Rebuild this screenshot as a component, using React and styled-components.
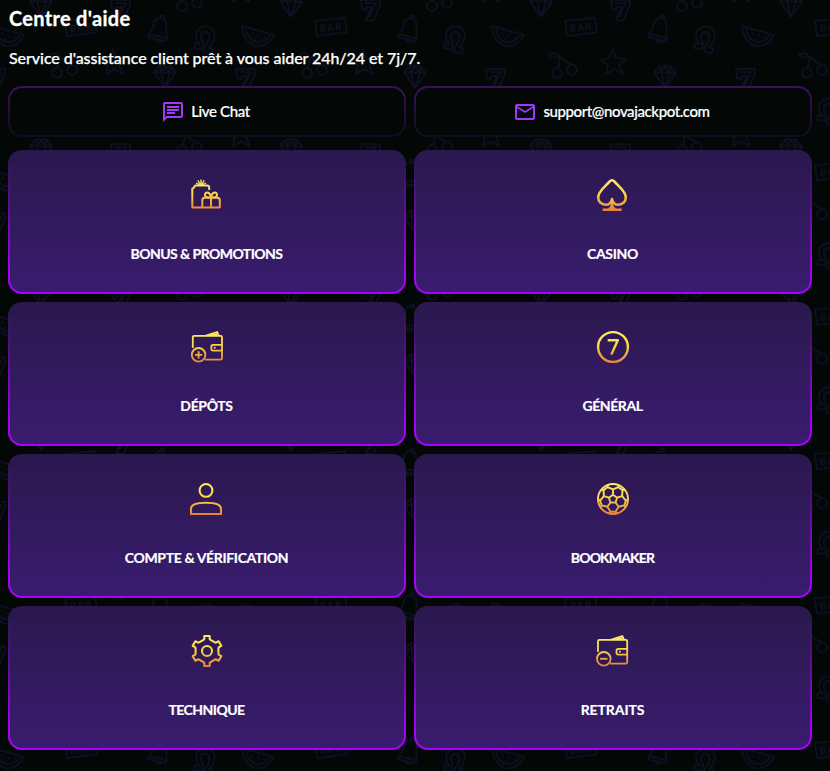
import React from 'react';
import { MdOutlineChat, MdOutlineEmail } from 'react-icons/md';
import styled, { createGlobalStyle } from 'styled-components';

const GlobalStyle = createGlobalStyle`
  * {
    box-sizing: border-box;
  }

  body {
    margin: 0;
    background: #030807;
    color: #fff;
    font-family: 'Lato', 'Open Sans', sans-serif;
  }
`;

// point around the icon centre, 0deg is the top
const polar = (r, deg) => {
  const a = ((deg - 90) * Math.PI) / 180;
  return `${(16 + r * Math.cos(a)).toFixed(2)} ${(16 + r * Math.sin(a)).toFixed(2)}`;
};

const gearPath = `M${[0, 60, 120, 180, 240, 300]
  .map((a) =>
    [
      polar(11.6, a - 20),
      polar(12.2, a - 13),
      polar(15.2, a - 10),
      polar(15.2, a + 10),
      polar(12.2, a + 13),
      polar(11.6, a + 20),
    ].join('L')
  )
  .join('L')}Z`;

const fifths = [0, 72, 144, 216, 288];
const ballPath = `M${fifths.map((a) => polar(4.3, a)).join('L')}Z${fifths
  .map(
    (a) =>
      `M${polar(4.3, a)}L${polar(9.6, a)}M${polar(13, a - 25)}L${polar(9.6, a)}L${polar(13, a + 25)}M${polar(15, a + 20)}L${polar(13, a + 25)}L${polar(13, a + 47)}L${polar(15, a + 52)}`
  )
  .join('')}`;

const wallet = (
  <>
    <path d="M1.8 17V6.2Q1.8 4.8 3.2 4.8H29.6Q31 4.8 31 6.2V27.2Q31 28.6 29.6 28.6H14" />
    <path d="M15 4.6L26.2 1L27.8 4.6M18.5 4.6L26 3.3" />
    <path d="M31 13.8H22.2Q20.3 13.8 20.3 15.6V17.8Q20.3 19.6 22.2 19.6H31" />
    <path d="M22.8 16.7H24.6" />
    <circle cx="7.6" cy="23.8" r="6.8" />
  </>
);

const drawings = {
  gift: (
    <>
      <path d="M18.2 11V8.8Q18.2 6.5 16 6.5H4.8Q3.9 6.7 3.3 7.8Q2.8 9.2 1.3 9.6V28.6H28.8V21.4Q28.8 18.8 26.5 18.8H13.6Q11.3 18.8 11.3 21.4V28.6" />
      <path d="M20 18.8V28.6" />
      <path d="M20 18.5C14.4 18.6 13.4 16.8 14.1 15C15.2 12.7 19.2 12.7 20 18.5C20.8 12.7 24.8 12.7 25.9 15C26.6 16.8 25.6 18.6 20 18.5" />
      <path d="M10 6V.4M9.4 6L6.8 1.4M10.6 6L13.2 1.4M8.6 6L5 4M11.4 6L15 4" strokeWidth="1.4" />
    </>
  ),
  spade: (
    <>
      <path d="M15 20C14.2 23.8 11.8 26 8.4 25.8C4.2 25.5 1.2 22.4 1.2 18.5C1.2 11.8 8.5 7.4 12.5 2.6Q15 -.2 17.5 2.6C21.5 7.4 28.8 11.8 28.8 18.5C28.8 22.4 25.8 25.5 21.6 25.8C18.2 26 15.8 23.8 15 20Z" />
      <path d="M15 21V30M5.6 30.8H24.6M11.6 30.3Q14.6 29.8 15 26Q15.4 29.8 18.4 30.3" />
    </>
  ),
  deposit: (
    <>
      {wallet}
      <path d="M7.6 20.2V27.4M4 23.8H11.2" />
    </>
  ),
  seven: (
    <>
      <circle cx="16" cy="16" r="14.9" />
      <path d="M10.7 9.3H20.8L14.4 23.5" />
    </>
  ),
  user: (
    <>
      <circle cx="15" cy="7.4" r="6.4" />
      <path d="M0 31V26C0 22 6 19.8 15 19.8S30 22 30 26V31Z" />
    </>
  ),
  ball: (
    <>
      <circle cx="16" cy="16" r="15" />
      <path d={ballPath} />
    </>
  ),
  gear: (
    <>
      <path d={gearPath} />
      <circle cx="16" cy="16" r="5" />
    </>
  ),
  withdraw: (
    <g transform="translate(-0.8 0)">
      {wallet}
      <path d="M3.9 23.8H11.3" />
    </g>
  ),
};

const topics = [
  { icon: 'gift', label: 'BONUS & PROMOTIONS', stroke: 2, spacing: -0.55 },
  { icon: 'spade', label: 'CASINO', stroke: 2.5, spacing: -0.3 },
  { icon: 'deposit', label: 'DÉPÔTS', stroke: 1.8, spacing: -0.35 },
  { icon: 'seven', label: 'GÉNÉRAL', stroke: 2.4, spacing: -0.4 },
  { icon: 'user', label: 'COMPTE & VÉRIFICATION', stroke: 2.1, spacing: -0.35 },
  { icon: 'ball', label: 'BOOKMAKER', stroke: 1.9, spacing: -0.85 },
  { icon: 'gear', label: 'TECHNIQUE', stroke: 2.1, spacing: -0.55 },
  { icon: 'withdraw', label: 'RETRAITS', stroke: 1.8, spacing: -0.1 },
];

function TopicIcon({ name, stroke }) {
  return (
    <GoldIcon viewBox="0 0 32 32" strokeWidth={stroke} stroke={`url(#gold-${name})`}>
      <defs>
        <linearGradient
          id={`gold-${name}`}
          gradientUnits="userSpaceOnUse"
          x1="0"
          y1="0"
          x2="0"
          y2="32"
        >
          <stop offset="0" stopColor="#ffea68" />
          <stop offset="0.45" stopColor="#fbd84c" />
          <stop offset="1" stopColor="#e58136" />
        </linearGradient>
      </defs>
      {drawings[name]}
    </GoldIcon>
  );
}

function Backdrop() {
  return (
    <BackdropSvg>
      <defs>
        <g id="diamond">
          <path d="M-11 -4L-5 -10H5L11 -3L0 12ZM-11 -4L11 -3M-5 -10L-4 -4L0 12L5 -3L5 -10M-4 -4L0 -9L5 -3" />
        </g>
        <g id="seven">
          <path d="M-9 -9L10 -9L10 -4L3 12L-4 11L2 -2L-3 -2L-4 1L-8 0ZM-5 -6L6 -6L-1 8" />
        </g>
        <g id="cherry">
          <circle cx="-8" cy="9" r="5" />
          <circle cx="7" cy="6" r="5" />
          <path d="M-8 4Q-4 -2 -6 -8Q0 -2 7 1M-6 -8Q-10 -13 -16 -9Q-11 -4 -6 -8" />
        </g>
        <g id="star">
          <path d="M0 -13L3 -4L13 -3L6 3L10 12L1 7L-7 12L-5 3L-13 -2L-4 -4Z" />
        </g>
        <g id="horseshoe">
          <path d="M-11 10L-10 5L-5 6Q-11 0 -8 -7Q-3 -13 5 -11Q12 -6 9 1Q8 6 4 9L8 10L7 15L-1 14L0 8Q6 2 4 -4Q1 -8 -3 -5Q-6 -1 -2 4L-3 11Z" />
        </g>
        <g id="bell">
          <path d="M-9 6Q-5 2 -4 -5Q-1 -12 6 -9Q10 -5 8 3L9 10ZM-9 6L-10 9L7 13L9 10M-3 11Q0 16 4 13M2 -10Q3 -14 6 -12L5 -9" />
        </g>
        <g id="melon">
          <path d="M-16 -9L16 0Q9 13 -3 11Q-15 6 -16 -9ZM-12 -6Q-10 5 -2 7Q7 8 12 0M-6 -2L-5 0M0 0L1 2M6 2L7 3M-3 4L-2 5" />
        </g>
        <g id="bar">
          <path d="M-16 -6L14 -9L16 5L-14 9Z" />
          <text x="0" y="4" textAnchor="middle" transform="rotate(-6)">
            BAR
          </text>
        </g>
        <pattern id="slots" width="250" height="144.4" patternUnits="userSpaceOnUse">
          <g>
            <use href="#diamond" x="41" y="5" />
            <use href="#diamond" x="41" y="149.4" />
            <use href="#seven" x="120" y="9" />
            <use href="#seven" x="120" y="153.4" />
            <use href="#cherry" x="190" y="-3" />
            <use href="#cherry" x="190" y="141.4" />
            <use href="#star" x="240" y="-10" />
            <use href="#star" x="240" y="134.4" />
            <use href="#bar" x="81" y="27" />
            <use href="#bell" x="158" y="28" />
            <use href="#horseshoe" x="205" y="38" />
            <use href="#melon" x="8" y="35" />
            <use href="#melon" x="258" y="35" />
            <use href="#cherry" x="65" y="64" />
            <use href="#star" x="113" y="62" />
            <use href="#diamond" x="165" y="76" />
            <use href="#seven" x="-5" y="78" />
            <use href="#seven" x="245" y="78" />
            <use href="#horseshoe" x="78" y="110" />
          </g>
        </pattern>
      </defs>
      <rect width="100%" height="100%" fill="url(#slots)" stroke="none" />
    </BackdropSvg>
  );
}

function App() {
  return (
    <Page>
      <GlobalStyle />
      <Backdrop />
      <Title>Centre d'aide</Title>
      <Subtitle>Service d'assistance client prêt à vous aider 24h/24 et 7j/7.</Subtitle>
      <Contacts>
        <ContactButton $spacing={-0.35}>
          <MdOutlineChat />
          <span>Live Chat</span>
        </ContactButton>
        <ContactButton $spacing={-0.4}>
          <MdOutlineEmail />
          <span>support@novajackpot.com</span>
        </ContactButton>
      </Contacts>
      <Topics>
        {topics.map((topic) => (
          <TopicCard key={topic.icon}>
            <TopicIcon name={topic.icon} stroke={topic.stroke} />
            <TopicLabel $spacing={topic.spacing}>{topic.label}</TopicLabel>
          </TopicCard>
        ))}
      </Topics>
    </Page>
  );
}

const Page = styled.main`
  position: relative;
  isolation: isolate;
  width: 830px;
  height: 771px;
  padding: 6px 18px 0 8px;
  overflow: hidden;
`;

const BackdropSvg = styled.svg`
  position: absolute;
  inset: 0;
  z-index: -1;
  width: 100%;
  height: 100%;
  fill: none;
  stroke: #120f25;
  stroke-width: 1.5;
  stroke-linejoin: round;

  text {
    fill: #120f25;
    stroke: none;
    font-size: 10px;
    font-weight: 700;
    letter-spacing: 1px;
  }
`;

const Title = styled.h1`
  margin: 0;
  padding-left: 1px;
  font-size: 20px;
  line-height: 24px;
  font-weight: 700;
  letter-spacing: 0.3px;
  -webkit-text-stroke: 0.3px;
`;

const Subtitle = styled.p`
  margin: 16px 0 0;
  padding-left: 1px;
  height: 40px;
  font-size: 16px;
  line-height: 24px;
  font-weight: 500;
  letter-spacing: -0.06px;
  white-space: nowrap;
  -webkit-text-stroke: 0.25px;
`;

const Contacts = styled.div`
  display: grid;
  grid-template-columns: 1fr 1fr;
  gap: 8px;
`;

const ContactButton = styled.button`
  display: flex;
  align-items: center;
  justify-content: center;
  gap: 6px;
  height: 51px;
  padding: 0 3px 0 0;
  border: 2px solid transparent;
  border-radius: 14px;
  background:
    linear-gradient(#030807, #030807) padding-box,
    linear-gradient(#3b1258, #120b20) border-box;
  color: #fff;
  font-family: inherit;
  font-size: 15px;
  font-weight: 500;
  letter-spacing: ${({ $spacing }) => $spacing}px;
  -webkit-text-stroke: 0.2px;

  span {
    margin-top: -2px;
  }

  svg {
    font-size: 24px;
    color: #a436ff;
  }
`;

const Topics = styled.div`
  display: grid;
  grid-template-columns: 1fr 1fr;
  gap: 8px;
  margin-top: 13px;
`;

const TopicCard = styled.div`
  display: flex;
  flex-direction: column;
  align-items: center;
  height: 144px;
  padding-top: 27px;
  border: 2px solid transparent;
  border-radius: 14px;
  background:
    linear-gradient(#2b184f, #391c6e) padding-box,
    linear-gradient(#2b184f 8%, #aa00ff 88%) border-box;
`;

const GoldIcon = styled.svg`
  width: 32px;
  height: 32px;
  fill: none;
  stroke-linejoin: round;
  overflow: visible;
`;

const TopicLabel = styled.span`
  margin-top: 33px;
  padding-right: 1px;
  font-size: 14px;
  line-height: 20px;
  font-weight: 700;
  letter-spacing: ${({ $spacing }) => $spacing}px;
  -webkit-text-stroke: 0.2px;
`;

export default App;
